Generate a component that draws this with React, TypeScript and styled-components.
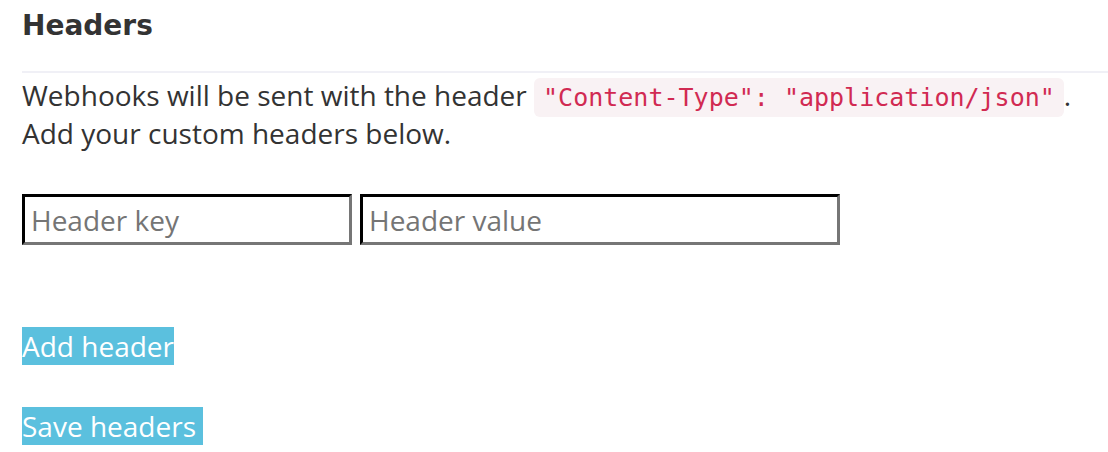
import React from 'react'
import styled, { createGlobalStyle } from 'styled-components'

const GlobalStyle = createGlobalStyle`
    body {
        margin: 0;
        background: #fff;
        font-family: 'Open Sans', 'Liberation Sans', sans-serif;
        color: #333;
    }
`

const Page = styled.div`
    padding: 7px 0 0 22px;
`

const Title = styled.h3`
    margin: 0;
    font-family: 'DejaVu Sans', 'Open Sans', sans-serif;
    font-weight: 700;
    font-size: 28px;
    line-height: 38px;
    color: #333;
`

const Rule = styled.hr`
    margin: 26px 0 0;
    border: none;
    border-top: 2px solid #f0f0f6;
`

const Text = styled.p`
    margin: 3px 0 0;
    font-size: 28px;
    line-height: 38px;
    color: #333;
`

const Code = styled.code`
    font-family: 'DejaVu Sans Mono', monospace;
    font-size: 25px;
    line-height: 1;
    color: #d12a52;
    background: #f9f2f4;
    padding: 5px 9px;
    border-radius: 6px;
`

const Fields = styled.div`
    display: flex;
    gap: 8px;
    margin-top: 42px;
`

const Field = styled.input<{ $width: number }>`
    width: ${(p) => p.$width}px;
    height: 51px;
    box-sizing: border-box;
    border: 3px inset #767676;
    border-top-color: #222;
    border-left-color: #222;
    padding: 0 6px;
    font-family: 'Open Sans', sans-serif;
    font-size: 28px;
    color: #333;
    outline: none;
    &::placeholder {
        color: #757575;
    }
`

const Actions = styled.div`
    display: flex;
    flex-direction: column;
    align-items: flex-start;
    gap: 42px;
    margin-top: 82px;
`

const Button = styled.button`
    border: none;
    background: #5bc0de;
    color: #fff;
    font-family: 'Open Sans', sans-serif;
    font-size: 28px;
    line-height: 38px;
    padding: 0;
    cursor: pointer;
`

export default function App() {
    return (
        <>
            <GlobalStyle />
            <Page>
                <Title>Headers</Title>
                <Rule />
                <Text>
                    Webhooks will be sent with the header{' '}
                    <Code>"Content-Type": "application/json"</Code>.
                    <br />
                    Add your custom headers below.
                </Text>
                <Fields>
                    <Field $width={330} placeholder="Header key" />
                    <Field $width={480} placeholder="Header value" />
                </Fields>
                <Actions>
                    <Button>Add header</Button>
                    <Button>Save headers&nbsp;</Button>
                </Actions>
            </Page>
        </>
    )
}
